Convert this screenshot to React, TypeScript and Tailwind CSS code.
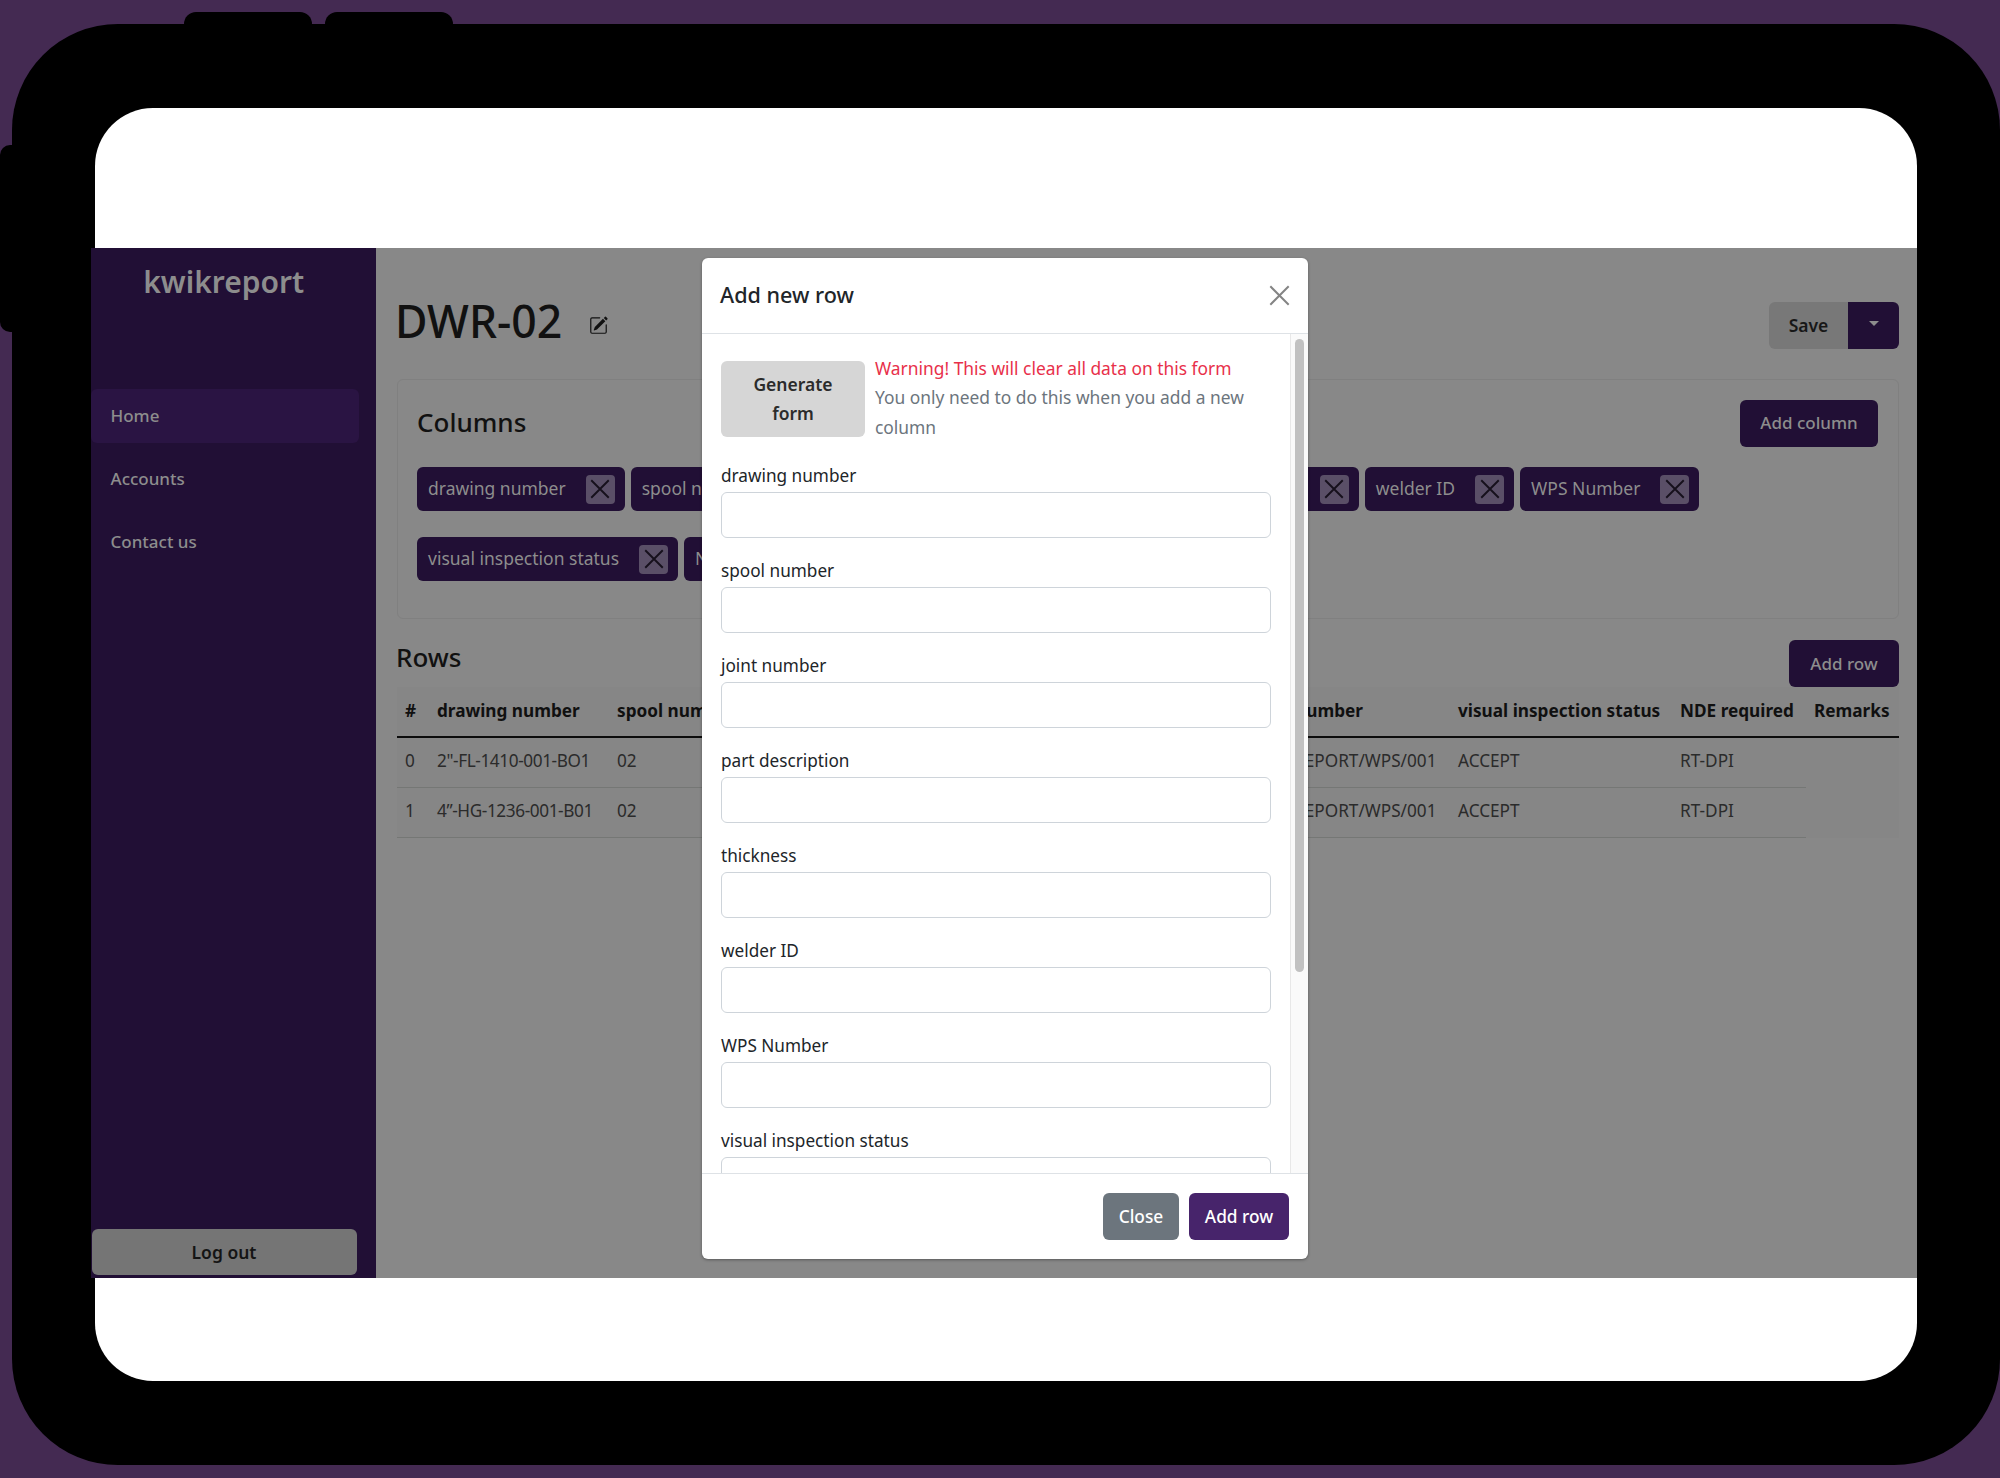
import { BsPencilSquare } from "react-icons/bs";

const chips = [
  "drawing number",
  "spool number",
  "joint number",
  "part description",
  "thickness",
  "welder ID",
  "WPS Number",
  "visual inspection status",
  "NDE required",
  "Remarks",
];

const fields = chips.slice(0, 8);

const columns = [
  "#",
  "drawing number",
  "spool number",
  "joint number",
  "part description",
  "thickness",
  "welder ID",
  "WPS Number",
  "visual inspection status",
  "NDE required",
  "Remarks",
];

const rows = [
  ["0", '2"-FL-1410-001-BO1', "02", "J-01", "FLANGE", "6.02", "W-01", "KWIKREPORT/WPS/001", "ACCEPT", "RT-DPI"],
  ["1", "4”-HG-1236-001-B01", "02", "J-02", "ELBOW", "6.02", "W-02", "KWIKREPORT/WPS/001", "ACCEPT", "RT-DPI"],
];

const widths = [
  "w-[32px]",
  "w-[180px]",
  "w-[140px]",
  "w-[130px]",
  "w-[160px]",
  "w-[114px]",
  "w-[90px]",
  "w-[207px]",
  "w-[222px]",
  "w-[134px]",
  "w-[93px]",
];

function CrossIcon({ className }: { className: string }) {
  return (
    <svg viewBox="0 0 16 16" fill="none" stroke="currentColor" strokeWidth="1.5" className={className}>
      <path d="M1 1 15 15M15 1 1 15" />
    </svg>
  );
}

function Sidebar() {
  return (
    <aside className="-ml-[4px] flex w-[285.5px] shrink-0 flex-col bg-[#210f35] text-[#8d8d8d]">
      <div className="mt-[12px] pr-[19px] text-center text-[30px] leading-[44px] font-semibold">kwikreport</div>
      <nav className="mt-[85px] flex flex-col gap-[9px] text-[17px] font-medium">
        <div className="flex h-[54px] w-[268px] items-center rounded-md bg-[#2a1443] pl-[20px]">Home</div>
        <div className="flex h-[54px] items-center pl-[20px]">Accounts</div>
        <div className="flex h-[54px] items-center pl-[20px]">Contact us</div>
      </nav>
      <button className="mt-auto mb-[3px] ml-[1px] h-[46px] w-[265px] rounded-md bg-[#757575] text-[17.5px] font-semibold text-[#141414]">
        Log out
      </button>
    </aside>
  );
}

function Chip({ label }: { label: string }) {
  return (
    <div className="flex h-[44px] items-center gap-[20px] rounded-md bg-[#210f35] pr-[10px] pl-[11px] text-[17.5px] text-[#8d8d8d]">
      <span className="-mt-[2px]">{label}</span>
      <span className="flex size-[29px] items-center justify-center rounded bg-[#5a4f67] text-[#16101c]">
        <CrossIcon className="size-[20px]" />
      </span>
    </div>
  );
}

function DataTable() {
  return (
    <table className="w-[1502px] table-fixed border-collapse bg-[#868686] text-left text-[17.2px] text-[#2b2b2b]">
      <thead>
        <tr className="h-[50px] border-b-2 border-[#0c0c0c] text-[#101010]">
          {columns.map((col, i) => (
            <th key={col} className={`${widths[i]} overflow-hidden px-[8px] pb-[1px] font-bold whitespace-nowrap`}>
              {col}
            </th>
          ))}
        </tr>
      </thead>
      <tbody>
        {rows.map((row) => (
          <tr key={row[0]} className="h-[50px]">
            {row.map((cell, i) => (
              <td
                key={i}
                className={`overflow-hidden border-b border-[#757775] px-[8px] pb-[2px] whitespace-nowrap ${
                  i === 1 ? "tracking-[-0.4px]" : ""
                }`}
              >
                {cell}
              </td>
            ))}
          </tr>
        ))}
      </tbody>
    </table>
  );
}

function AddRowModal() {
  return (
    <div className="absolute top-[10px] left-[326px] flex h-[1001px] w-[606px] flex-col overflow-hidden rounded-md bg-white shadow-[0_1px_3px_rgba(0,0,0,0.35)]">
      <div className="flex h-[76px] shrink-0 items-center justify-between border-b border-[#dee2e6] pr-[18px] pl-[18px]">
        <h5 className="text-[21.6px] font-medium text-[#212529]">Add new row</h5>
        <CrossIcon className="size-[21px] text-[#848484]" />
      </div>
      <div className="flex min-h-0 flex-1">
        <div className="min-w-0 flex-1 overflow-hidden pt-[27px] pr-[19px] pl-[19px]">
          <div className="flex gap-[10px]">
            <button className="h-[76px] w-[144px] shrink-0 rounded-md bg-[#d6d6d6] px-[24px] text-[17.5px] leading-[29.3px] font-semibold text-[#2b2b2b]">
              Generate form
            </button>
            <div className="-mt-[7px] text-[17.4px] leading-[29.3px] text-[#6c757d]">
              <div className="text-[#e8304a]">Warning! This will clear all data on this form</div>
              You only need to do this when you add a new column
            </div>
          </div>
          <div className="mt-[20px] flex flex-col gap-[19px]">
            {fields.map((field) => (
              <div key={field}>
                <label className="block h-[30px] text-[17.2px] leading-[28px] text-[#212529]">{field}</label>
                <div className="h-[46px] rounded-md border border-[#ced4da] bg-white" />
              </div>
            ))}
          </div>
        </div>
        <div className="w-[18px] shrink-0 border-l border-[#e8e8e8] bg-[#fafafa] pt-[5px] pl-[4px]">
          <div className="h-[633px] w-[9px] rounded-full bg-[#c1c1c1]" />
        </div>
      </div>
      <div className="flex h-[86px] shrink-0 items-start justify-end gap-[10px] border-t border-[#dee2e6] pt-[19px] pr-[19px] text-[17.3px] font-medium text-white">
        <button className="h-[47px] w-[76px] rounded-md bg-[#6c757d]">Close</button>
        <button className="h-[47px] w-[100px] rounded-md bg-[#47246b]">Add row</button>
      </div>
    </div>
  );
}

function MainPanel() {
  return (
    <main className="relative min-w-0 flex-1 bg-[#888888] pt-[54px] pr-[18px] pl-[21px]">
      <div className="flex h-[47px] items-center justify-between">
        <div className="flex items-center gap-[27px]">
          <h1 className="-mt-[10px] -ml-[2px] text-[44.5px] leading-[47px] font-medium text-[#111111]">DWR-02</h1>
          <BsPencilSquare className="-mt-[1px] size-[19px] text-[#111111]" />
        </div>
        <div className="flex h-[47px] overflow-hidden rounded-md text-[17.5px] font-semibold text-[#171717]">
          <div className="flex w-[79px] items-center justify-center bg-[#787878]">Save</div>
          <div className="flex w-[51px] items-start justify-center bg-[#210f35] pt-[19px]">
            <span className="border-x-[5px] border-t-[5px] border-x-transparent border-t-[#8d8d8d]" />
          </div>
        </div>
      </div>

      <section className="mt-[30px] h-[240px] rounded-md border border-[#808080] pt-[20px] pr-[20px] pl-[19px]">
        <div className="flex items-center justify-between">
          <h2 className="-mt-[2px] text-[26px] leading-[47px] font-medium text-[#111111]">Columns</h2>
          <button className="h-[47px] w-[138px] rounded-md bg-[#210f35] pb-[2px] text-[17px] font-medium text-[#8d8d8d]">
            Add column
          </button>
        </div>
        <div className="mt-[20px] flex flex-wrap gap-x-[6px] gap-y-[26px]">
          {chips.map((chip) => (
            <Chip key={chip} label={chip} />
          ))}
        </div>
      </section>

      <div className="mt-[21px] flex h-[47px] justify-between">
        <h2 className="-ml-[1px] text-[26px] leading-[35px] font-medium text-[#111111]">Rows</h2>
        <button className="h-[47px] w-[110px] rounded-md bg-[#210f35] text-[17px] font-medium text-[#8d8d8d]">
          Add row
        </button>
      </div>
      <DataTable />
      <AddRowModal />
    </main>
  );
}

export default function App() {
  return (
    <div
      className="relative h-[1478px] w-[2000px] overflow-hidden bg-[#442a52] pt-[24px] pl-[12px]"
      style={{ fontFamily: '"Noto Sans", sans-serif' }}
    >
      {/* hardware buttons on the tablet frame */}
      <div className="absolute top-[12px] left-[184px] h-[20px] w-[128px] rounded-t-[12px] bg-black" />
      <div className="absolute top-[12px] left-[325px] h-[20px] w-[128px] rounded-t-[12px] bg-black" />
      <div className="absolute top-[145px] left-0 h-[187px] w-[20px] rounded-l-[10px] bg-black" />

      <div className="relative h-[1441px] w-[1988px] rounded-[106px] bg-black pt-[84px] pl-[82.5px]">
        <div className="flex h-[1273px] w-[1822.5px] flex-col rounded-[58px] bg-white pt-[140px] pb-[103px]">
          <div className="flex min-h-0 flex-1">
            <Sidebar />
            <MainPanel />
          </div>
        </div>
      </div>
    </div>
  );
}
